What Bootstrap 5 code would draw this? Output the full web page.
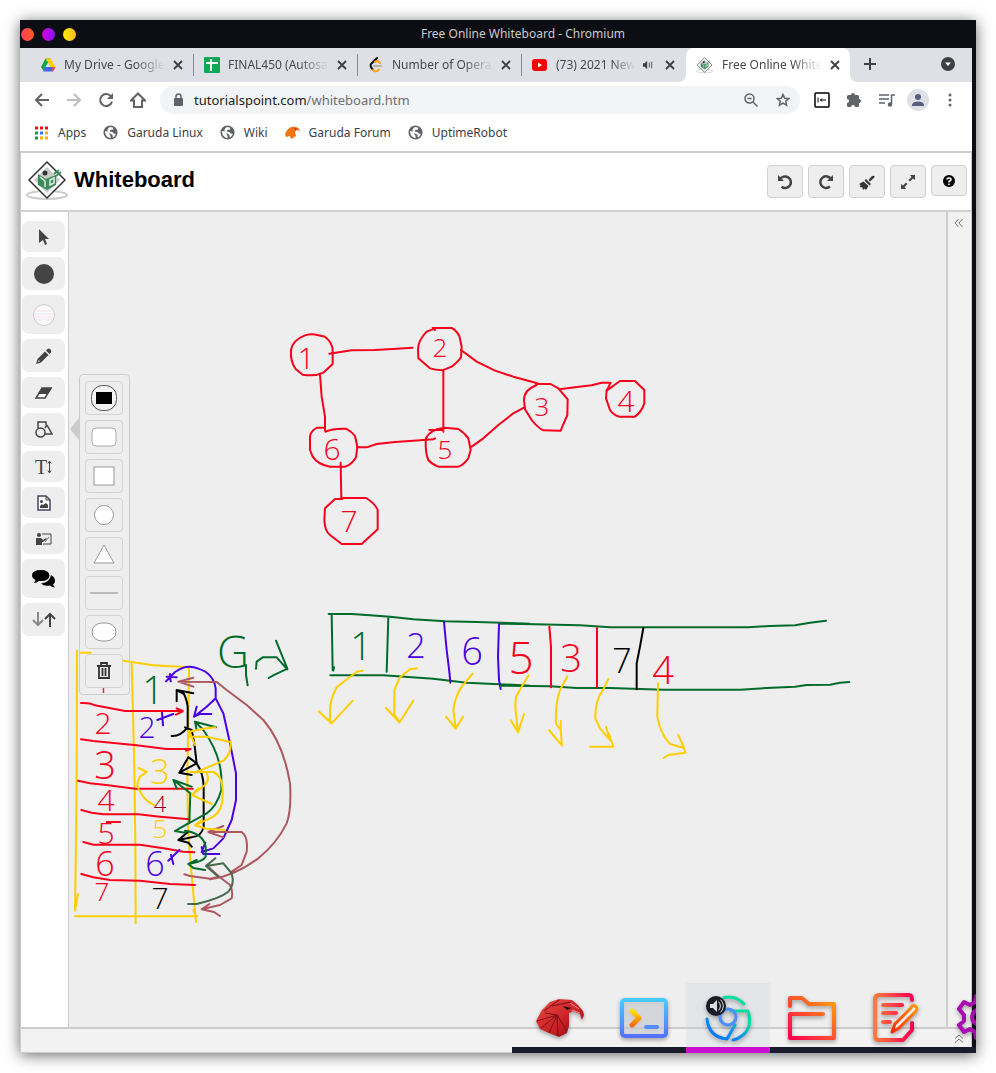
<!DOCTYPE html>
<html lang="en">
<head>
<meta charset="utf-8">
<meta name="viewport" content="width=device-width, initial-scale=1">
<title>Free Online Whiteboard</title>
<link href="https://cdn.jsdelivr.net/npm/bootstrap@5.3.0/dist/css/bootstrap.min.css" rel="stylesheet">
<style>
  body { background: #fff; font-family: "Noto Sans", "Open Sans", sans-serif; font-size: 12px; line-height: 18px; color: #3c4043; }
  svg { display: block; flex: none; }
  button { padding: 0; border: 0; background: none; color: inherit; }
  .desk { padding: 20px; min-height: 100vh; }
  .win { background: #fff; border-right: 4px solid #0d0e13; box-shadow: 0 2px 14px rgba(0,0,0,.6); min-width: 0; }
  .titlebar { background: #0d0e13; color: #c8cacd; height: 28px; margin-right: -4px; padding-left: 50px; }
  .dots { gap: 8px; left: 1px; top: 8px; }
  .dots button { width: 13px; height: 13px; border-radius: 50%; }
  .dot-r { background: linear-gradient(90deg, #ff3f5e, #ff5a1f) !important; }
  .dot-p { background: linear-gradient(90deg, #d300d8, #8a12ff) !important; }
  .dot-y { background: linear-gradient(90deg, #fff000, #ffb52b) !important; }
  .tabstrip { background: #dee0e6; height: 34px; padding-left: 10px; }
  .btab { width: 164px; padding: 0 10px 0 10px; gap: 8px; border-right: 1px solid #85888f; border-image: linear-gradient(transparent 7px, #85888f 7px, #85888f 27px, transparent 27px) 1; }
  .btab.last-idle { border-color: transparent; border-image: none; }
  .btab.open { background: #fff; border: 0; border-radius: 8px 8px 0 0; position: relative; }
  .btab.open::before, .btab.open::after { content: ""; position: absolute; bottom: 0; width: 8px; height: 8px; }
  .btab.open::before { left: -8px; background: radial-gradient(circle at 0 0, transparent 8px, #fff 8px); }
  .btab.open::after { right: -8px; background: radial-gradient(circle at 8px 0, transparent 8px, #fff 8px); }
  .btab a { color: #45484d; text-decoration: none; white-space: nowrap; overflow: hidden; flex: 1 1 0; -webkit-mask-image: linear-gradient(90deg, #000 70%, transparent); mask-image: linear-gradient(90deg, #000 70%, transparent); }
  .navrow { height: 36px; padding: 0 6px; }
  .navrow > button, .tbtn { width: 32px; height: 32px; display: flex; align-items: center; justify-content: center; flex: none; }
  .omni { background: #f1f3f4; border-radius: 14px; height: 28px; margin: 0 6px; padding: 0 10px 0 12px; gap: 10px; font-size: 13px; }
  .omni .url { flex: 1; min-width: 0; color: #6b7075; white-space: nowrap; overflow: hidden; cursor: text; }
  .omni .url b { color: #202124; font-weight: 400; }
  .bookmarks { height: 33px; gap: 17px; padding: 0 0 4px 15px; }
  .bookmarks a { color: #3c4043; text-decoration: none; gap: 9px; }
  .wb { border: 1px solid #ccc; border-top: 2px solid #ccc; flex: 1; }
  .wb-head { height: 59px; border-bottom: 2px solid #d0d0d0; padding: 12px 4px 0 5px; }
  .crest { margin-top: -6px; }
  .wb-head h1 { font: bold 22px/28px "Liberation Sans", Arial, sans-serif; color: #000; margin: 1px 0 0 4px; }
  .wb-head .acts { gap: 5px; margin-left: auto; }
  .wb-head .acts button { width: 36px; height: 33px; border: 1px solid #d0d0d0; border-radius: 4px; background: #eee; display: flex; align-items: center; justify-content: center; color: #444; }
  .wb-head .acts .help { height: 31px; }
  .tools { width: 48px; background: #fff; border-right: 1px solid #ccc; padding: 9px 3px 9px 1px; gap: 5px; }
  .tools button { width: 43px; height: 33px; border-radius: 7px; background: #eee; color: #444; display: flex; align-items: center; justify-content: center; flex: none; }
  .tools .low { height: 31px; }
  .tools .tall { height: 39px; }
  .tools .ti { font: 20px/24px "Liberation Serif", serif; }
  .board { background: #eee; overflow: hidden; min-height: 490px; min-width: 0; }
  .board .ink { position: absolute; inset: 0; width: 100%; height: 100%; fill: none; stroke-width: 2px; stroke-linecap: round; stroke-linejoin: round; }
  .ink svg { stroke-width: 6px; display: inline; }
  .ink text { stroke: none; text-anchor: middle; font-family: "Open Sans", sans-serif; font-weight: 300; font-size: 30px; }
  .ink .s22 { font-size: 22px; } .ink .s26 { font-size: 26px; } .ink .s34 { font-size: 34px; } .ink .s38 { font-size: 38px; } .ink .s44 { font-size: 44px; }
  .red { stroke: #f8001c; } text.red { fill: #f8001c; }
  .grn { stroke: #006b2b; } text.grn { fill: #006b2b; }
  .blu { stroke: #4a00e0; } text.blu { fill: #4a00e0; }
  .yel { stroke: #ffce00; } text.yel { fill: #ffce00; }
  .blk { stroke: #000; } text.blk { fill: #000; }
  .wine { stroke: #8b0020; } text.wine { fill: #8b0020; }
  .rose { stroke: #ad5860; }
  .moss { stroke: #44694c; }
  .shapes { position: absolute; left: 10px; top: 162px; width: 51px; border: 1px solid #ccc; border-radius: 4px; padding: 6px 6px 6px 5px; gap: 5px; }
  .shapes::before { content: ""; position: absolute; left: -10px; top: 43px; border: 11px solid transparent; border-left: 0; border-right: 9px solid #ccc; }
  .shapes button { height: 34px; border: 1px solid #d3d3d3; border-radius: 4px; background: #eee; display: flex; align-items: center; justify-content: center; color: #444; }
  .side { width: 25px; background: #f2f2f2; border-left: 2px solid #ccc; padding: 6px 3px 0 0; color: #777; }
  .foot { height: 25px; border-top: 2px solid #ccc; background: #f2f2f2; padding: 0 7px 4px 0; color: #777; }
  .dock { position: absolute; right: -4px; bottom: 0; width: 464px; padding-left: 6px; overflow: hidden; }
  .dock::before { content: ""; position: absolute; left: 0; right: 0; bottom: 0; height: 6px; background: #191c2a; }
  .dock button { width: 84px; height: 70px; display: flex; justify-content: center; flex: none; border-bottom: 6px solid transparent; position: relative; padding-top: 10px; }
  .dock .now { background: rgba(200,204,220,.25); border-bottom-color: #c80fd0; }
  .dock svg { filter: drop-shadow(0 2px 2px rgba(0,0,0,.35)); }
</style>
<script src="https://cdn.jsdelivr.net/npm/bootstrap@5.3.0/dist/js/bootstrap.bundle.min.js"></script>
</head>
<body>
<svg width="0" height="0" class="position-absolute" aria-hidden="true">
  <defs>
    <symbol id="x" viewBox="0 0 10 10"><path d="M1 1l8 8M9 1l-8 8" stroke="#3c4043" stroke-width="1.800"/></symbol>
    <symbol id="globe" viewBox="0 0 16 16"><circle cx="8" cy="8" r="7.500" fill="#5f6368"/><path d="M2.200 6.500L5 7l2 2v1.500l1 1V14Q3 13 2.200 8zM8 2l3 .8L10.500 5H8L7 7l3 .5 1.500 1.500 2.300.5Q12 13 10.500 13.200L10 10.500 6 8 4.500 5.500 6 3z" fill="#fff"/></symbol>
    <symbol id="logo" viewBox="0 0 44 42"><ellipse cx="21" cy="36" rx="20" ry="4" fill="none" stroke="#ccc" stroke-width="2"/><path d="M21 3l18 18-18 18L3 21z" fill="#fff" stroke="#333" stroke-width="1.500"/><path d="M21 8l13 13-13 13L8 21z" fill="#c9cbc9"/><circle cx="19" cy="14" r="2.500" fill="#333"/><path d="M12 15l8 5 10-4v10l-9 5-9-5z" fill="#3b8b5c"/><path d="M14 18l5 4v6M24 21l4-2v5l-4 2z" fill="none" stroke="#ddeee4" stroke-width="1.500"/><path d="M28 15l5-4m-3 6l5-4" stroke="#3b8b5c" stroke-width="2"/></symbol>
    <linearGradient id="gTerm" x1="0" y1="0" x2="0" y2="1"><stop stop-color="#46ccff"/><stop offset="1" stop-color="#5570ff"/></linearGradient>
    <linearGradient id="gSun" x1="0" y1="0" x2="0" y2="1"><stop stop-color="#ffe000"/><stop offset="1" stop-color="#ff6a00"/></linearGradient>
    <linearGradient id="gFold" x1="0" y1="1" x2="1" y2="0"><stop stop-color="#ff0050"/><stop offset="1" stop-color="#ffa50a"/></linearGradient>
    <linearGradient id="gNote" x1="0" y1="0" x2="1" y2="0"><stop stop-color="#ff7a3c"/><stop offset="1" stop-color="#ff0050"/></linearGradient>
    <linearGradient id="gPen" x1="1" y1="0" x2="0" y2="1"><stop stop-color="#ff9a0a"/><stop offset="1" stop-color="#ff2800"/></linearGradient>
    <linearGradient id="gChr" x1="0" y1="1" x2="1" y2="0"><stop stop-color="#006cff"/><stop offset=".45" stop-color="#1090f0"/><stop offset=".75" stop-color="#00dca0"/></linearGradient>
    <linearGradient id="gBird" x1="0" y1="0" x2="1" y2="1"><stop stop-color="#ee4a4a"/><stop offset=".6" stop-color="#c81e22"/><stop offset="1" stop-color="#7a0d12"/></linearGradient>
  </defs>
</svg>
<div class="desk d-flex flex-column">
<div class="win d-flex flex-column flex-grow-1 position-relative">

  <header class="titlebar d-flex align-items-center justify-content-center position-relative">
    <div class="dots d-flex position-absolute">
      <button class="dot-r" aria-label="Close window"></button><button class="dot-p" aria-label="Maximise window"></button><button class="dot-y" aria-label="Minimise window"></button>
    </div>
    <span>Free Online Whiteboard - Chromium</span>
  </header>

  <nav class="tabstrip d-flex" aria-label="Tabs">
    <div class="btab d-flex align-items-center">
      <svg width="16" height="16" viewBox="0 0 16 16"><path d="M5.500 1.500h5L8 6 3.500 14 1 10z" fill="#0da84f"/><path d="M5.500 1.500h5L15.500 10h-5z" fill="#ffcc00"/><path d="M5 10h10.500L13 14.500H3.300z" fill="#4a64f2"/><path d="M13 10h2.500L13 14.500 11.500 12z" fill="#ff4a3a"/><path d="M8 6l2.500 4h-5z" fill="#dee0e6"/></svg>
      <a href="#">My Drive - Google</a>
      <button aria-label="Close tab"><svg width="10" height="10"><use href="#x"/></svg></button>
    </div>
    <div class="btab d-flex align-items-center">
      <svg width="16" height="16" viewBox="0 0 16 16"><rect width="16" height="16" rx="1" fill="#0fa958"/><path d="M2 6h12M7 2v12" stroke="#fff" stroke-width="2"/></svg>
      <a href="#">FINAL450 (Autosa</a>
      <button aria-label="Close tab"><svg width="10" height="10"><use href="#x"/></svg></button>
    </div>
    <div class="btab d-flex align-items-center">
      <svg width="16" height="16" viewBox="0 0 16 16" fill="none" stroke-width="2" stroke-linecap="round"><path d="M6 9h7" stroke="#b3b3b3"/><path d="M9 1L3.500 6.500Q2 8 3 10l2 3" stroke="#111"/><path d="M5 13q3 3 6-.5M7 5q2-2 4 0l1 1" stroke="#ffa116"/></svg>
      <a href="#">Number of Opera</a>
      <button aria-label="Close tab"><svg width="10" height="10"><use href="#x"/></svg></button>
    </div>
    <div class="btab last-idle d-flex align-items-center">
      <svg width="16" height="16" viewBox="0 0 16 16"><rect y="2" width="15" height="12" rx="3" fill="#f00"/><path d="M6 5.500l4 2.500-4 2.500z" fill="#fff"/></svg>
      <a href="#">(73) 2021 New</a>
      <svg width="10" height="10" viewBox="0 0 12 10" fill="#3c4043"><path d="M0 3h2l3-3v10L2 7H0zM7 2h1v6H7zM10 1h1v8h-1z"/></svg>
      <button class="ms-1" aria-label="Close tab"><svg width="10" height="10"><use href="#x"/></svg></button>
    </div>
    <div class="btab open d-flex align-items-center">
      <svg width="18" height="18"><use href="#logo"/></svg>
      <a href="#" aria-current="page">Free Online White</a>
      <button aria-label="Close tab"><svg width="10" height="10"><use href="#x"/></svg></button>
    </div>
    <button class="tbtn ms-1" aria-label="New tab"><svg width="12" height="12" viewBox="0 0 12 12"><path d="M6 0v12M0 6h12" stroke="#3c4043" stroke-width="2"/></svg></button>
    <button class="tbtn ms-auto me-2" aria-label="Search tabs"><svg width="14" height="14" viewBox="0 0 14 14"><circle cx="7" cy="7" r="7" fill="#3c4043"/><path d="M4 5.500h6L7 9z" fill="#fff"/></svg></button>
  </nav>

  <div class="navrow d-flex align-items-center">
    <button aria-label="Back"><svg width="16" height="14" viewBox="0 0 16 14" fill="none" stroke="#5f6368" stroke-width="2"><path d="M15 7H2M8 1L2 7l6 6"/></svg></button>
    <button aria-label="Forward"><svg width="16" height="14" viewBox="0 0 16 14" fill="none" stroke="#bcbec1" stroke-width="2"><path d="M1 7h13M8 1l6 6-6 6"/></svg></button>
    <button aria-label="Reload"><svg width="16" height="16" viewBox="0 0 16 16" fill="none" stroke="#5f6368" stroke-width="2"><path d="M13 4.500A6 6 0 1 0 14 9.500"/><path d="M15 1v6H9z" fill="#5f6368" stroke="none"/></svg></button>
    <button aria-label="Home"><svg width="16" height="16" viewBox="0 0 16 16" fill="none" stroke="#5f6368" stroke-width="2"><path d="M1 8.500L8 1.500l7 7h-3V15H4V8.500z"/></svg></button>
    <div class="omni d-flex align-items-center flex-grow-1">
      <svg width="12" height="14" viewBox="0 0 12 14"><rect x="2" y="5" width="9" height="8" rx="1" fill="#5f6368"/><path d="M4 6V3.500a2.500 2.500 0 0 1 5 0V6" fill="none" stroke="#5f6368" stroke-width="1.500"/></svg>
      <div class="url"><b>tutorialspoint.com</b>/whiteboard.htm</div>
      <button class="me-2" aria-label="Zoom"><svg width="14" height="14" viewBox="0 0 14 14" fill="none" stroke="#5f6368" stroke-width="1.500"><circle cx="5.500" cy="5.500" r="4.500"/><path d="M3.500 5.500h4M9 9l4.500 4.500"/></svg></button>
      <button aria-label="Bookmark"><svg width="14" height="14" viewBox="0 0 14 14" fill="none" stroke="#5f6368" stroke-width="1.500"><path d="M7 1.500l1.700 3.800 4 .3-3 2.700.9 4L7 10.200 3.400 12.300l.9-4-3-2.700 4-.3z"/></svg></button>
    </div>
    <button aria-label="Extension"><svg width="16" height="16" viewBox="0 0 16 16"><rect x="1" y="1" width="14" height="14" rx="1" fill="none" stroke="#000" stroke-width="1.500"/><path d="M4 5.500v5M6 8h6M8 6.500L6.500 8 8 9.500" stroke="#000" fill="none"/></svg></button>
    <button aria-label="Extensions"><svg width="16" height="16" viewBox="0 0 16 16" fill="#5f6368"><path d="M1 4.500q0-1.500 1.500-1.500H5a2 2 0 1 1 4 0h2.500Q13 3 13 4.500V7a2 2 0 1 1 0 4v2.500q0 1.500-1.500 1.500H9a2 2 0 1 0-4 0H2.500Q1 15 1 13.500V11a2 2 0 1 0 0-4z"/></svg></button>
    <button aria-label="Media"><svg width="17" height="14" viewBox="0 0 17 14" fill="none" stroke="#5f6368" stroke-width="1.500"><path d="M1 2h10M1 6h10M1 10h6M13.500 11V2H17"/><circle cx="12" cy="11.500" r="1.500" fill="#5f6368"/></svg></button>
    <button aria-label="Profile"><svg width="22" height="22" viewBox="0 0 22 22"><circle cx="11" cy="11" r="11" fill="#dee0e6"/><circle cx="11" cy="8" r="3" fill="#565f7d"/><path d="M5 17v-1.500Q6 12.500 11 12.500t6 3V17z" fill="#565f7d"/></svg></button>
    <button aria-label="Menu"><svg width="4" height="14" viewBox="0 0 4 14" fill="#5f6368"><circle cx="2" cy="2" r="1.500"/><circle cx="2" cy="7" r="1.500"/><circle cx="2" cy="12" r="1.500"/></svg></button>
  </div>

  <nav class="bookmarks d-flex align-items-center" aria-label="Bookmarks">
    <a href="#" class="d-flex align-items-center"><svg width="14" height="14" viewBox="0 0 14 14"><path d="M0 2h14" stroke="#f8001c" stroke-width="3" stroke-dasharray="3 2"/><path d="M0 7h3M0 12h3" stroke="#0f9d58" stroke-width="3"/><path d="M5 7h3" stroke="#3b6ff5" stroke-width="3"/><path d="M10 7h3M5 12h3m2 0h3" stroke="#fbb000" stroke-width="3"/></svg>Apps</a>
    <a href="#" class="d-flex align-items-center"><svg width="15" height="15"><use href="#globe"/></svg>Garuda Linux</a>
    <a href="#" class="d-flex align-items-center"><svg width="15" height="15"><use href="#globe"/></svg>Wiki</a>
    <a href="#" class="d-flex align-items-center"><svg width="15" height="14" viewBox="0 0 15 14"><path d="M0 8Q2 3 6 1q5-1 7 1 2 1 2 4l-2-2q-2 0-3 2l1 4-3 2-2 1-1-3-4 1z" fill="#f47414"/><path d="M9 2l4 1-3 1z" fill="#b22"/></svg>Garuda Forum</a>
    <a href="#" class="d-flex align-items-center"><svg width="15" height="15"><use href="#globe"/></svg>UptimeRobot</a>
  </nav>

  <main class="wb d-flex flex-column">
    <div class="wb-head d-flex align-items-start">
      <svg width="44" height="42" class="crest"><use href="#logo"/></svg>
      <h1>Whiteboard</h1>
      <div class="acts d-flex align-items-start">
        <button aria-label="Undo"><svg width="16" height="16" viewBox="0 0 16 16"><path d="M3 5.500A5.800 5.800 0 1 1 4.500 12.800" fill="none" stroke="#444" stroke-width="2.500"/><path d="M1 1v6h6z" fill="#444"/></svg></button>
        <button aria-label="Redo"><svg width="16" height="16" viewBox="0 0 16 16"><path d="M13 5A5.800 5.800 0 1 0 12 12.500" fill="none" stroke="#444" stroke-width="2.500"/><path d="M15 1v6H9z" fill="#444"/></svg></button>
        <button aria-label="Clear"><svg width="16" height="18" viewBox="0 0 16 18" fill="#333"><path d="M12.500 3.500q2-1.500 2.800-.4t-1 2.500L11 8.500 9.500 7zM7 6l5 5-1.500 1.500-5-5zM4.500 8.500L9.500 13 7 17l-1.500-1.500L4 17l-.5-2.500L1 14l.5-2L0 11z"/></svg></button>
        <button aria-label="Full screen"><svg width="16" height="16" viewBox="0 0 16 16" fill="#444"><path d="M10 1h5v5l-2-1.500-3 3L8.500 6l3-3zM6 15H1v-5l2 1.500 3-3L7.500 10l-3 3z"/></svg></button>
        <button class="help" aria-label="Help"><svg width="12" height="12" viewBox="0 0 12 12"><circle cx="6" cy="6" r="6" fill="#000"/><path d="M4 4.500Q4 3 6 3t2 1.500Q8 5.500 6 6.500V7.500M6 8.500V10" fill="none" stroke="#fff" stroke-width="1.500"/></svg></button>
      </div>
    </div>

    <div class="d-flex flex-grow-1">
      <div class="tools d-flex flex-column" role="toolbar" aria-label="Drawing tools">
        <button class="low" aria-label="Select"><svg width="12" height="16" viewBox="0 0 12 16" fill="#444"><path d="M1 0l10 10H7l2 5-2 1-2-5-4 3z"/></svg></button>
        <button aria-label="Colour"><svg width="20" height="20"><circle cx="10" cy="10" r="10" fill="#444"/></svg></button>
        <button class="tall" aria-label="Background"><svg width="22" height="22"><circle cx="11" cy="11" r="10.500" fill="#faf8fa" stroke="#ccc"/><path d="M3 7h16M1 13h20" stroke="#fae4e4"/><path d="M2 10h18M3 16h16" stroke="#e9e9f4"/></svg></button>
        <button aria-label="Pencil"><svg width="16" height="16" viewBox="0 0 16 16" fill="#444"><path d="M11.500 1q1.500-1 3 .5T15 4.500L13.500 6 10 2.500zM9 3.500L12.500 7 5 14.500 0 16l1.500-5zM2.500 12L2 14l2-.5z" fill-rule="evenodd"/></svg></button>
        <button class="low" aria-label="Eraser"><svg width="18" height="12" viewBox="0 0 18 12"><path d="M7 1h9l-6 10H1z" fill="#fff" stroke="#444" stroke-width="1.500"/><path d="M7 1h10l-4 6H3z" fill="#444"/></svg></button>
        <button aria-label="Shapes"><svg width="18" height="17" viewBox="0 0 18 17" fill="none" stroke="#444" stroke-width="1.500"><path d="M3 7V1h8v3M12 4l5 9h-7"/><path d="M10 7l2-3"/><circle cx="5.500" cy="11.500" r="4.500" fill="#eee"/></svg></button>
        <button class="low ti" aria-label="Text"><span>T</span><svg width="5" height="14" viewBox="0 0 5 14"><path d="M2.500 2v10M1 3.500L2.500 1 4 3.500M1 10.500L2.500 13 4 10.500" fill="none" stroke="#444"/></svg></button>
        <button class="low" aria-label="Image"><svg width="14" height="16" viewBox="0 0 14 16"><path d="M1 1h8l4 4v10H1z" fill="#fff" stroke="#446" stroke-width="1.500"/><path d="M9 1v4h4" fill="none" stroke="#444"/><circle cx="4.500" cy="6.500" r="1.500" fill="#444"/><path d="M3 13v-2l2-2 1 1 3-2 2 2v3z" fill="#444"/></svg></button>
        <button class="low" aria-label="Present"><svg width="16" height="12" viewBox="0 0 16 12"><path d="M6 1h9v10H7" fill="none" stroke="#444" stroke-width="1"/><circle cx="3" cy="2" r="2" fill="#444"/><path d="M0 5h5l2 2 3-2 1 1-4 3H6v3H0z" fill="#444"/><path d="M9 9l4-5" stroke="#777"/></svg></button>
        <button class="tall" aria-label="Comments"><svg width="24" height="19" viewBox="0 0 24 19"><path d="M19 6q4 2 4 6 0 2-2 3.500l2 3q-3 0-5-2-6 1-9-2 9-1 10-8.500z"/><path d="M9 1q8 0 8.500 5.500Q17 12 9 12H7q-2 2-5 2l1.500-3Q0 9 0 6.500 0 1 9 1z"/></svg></button>
        <button aria-label="Reorder"><svg width="24" height="15" viewBox="0 0 24 15" fill="none" stroke-width="2"><path d="M6 0v13M1 8l5 5 5-5" stroke="#888"/><path d="M18 15V2M13 7l5-5 5 5" stroke="#444"/></svg></button>
      </div>

      <section class="board flex-grow-1 position-relative" aria-label="Board">
        <svg class="ink">
          <g transform="translate(-69 -212)">
            <!-- graph: nodes and edges -->
            <svg x="280" y="310" width="380" height="240" viewBox="0 0 1140 720" class="red">
              <path d="M75 76Q95 70 112 75L135 80Q160 100 158 125L158 162 130 188Q105 200 68 194L48 178Q30 155 33 120 38 90 75 76z"/>
              <path d="M148 131L215 121 285 120 350 116 398 113M120 195L125 260 135 320 135 362"/>
              <path d="M465 60L458 54 515 54Q528 60 538 78L545 110 543 142Q535 155 515 170L487 181Q465 180 450 175L415 145 414 118Q415 90 440 65L465 55"/>
              <path d="M543 120L590 155 645 182 700 200 772 220M490 182V365M448 360H490"/>
              <path d="M768 222H812L835 235 863 268 862 315 842 362 790 361Q775 355 755 330L735 298 732 270Q732 240 770 225M838 238L885 232 935 226 965 218 992 218 980 242"/>
              <path d="M980 242L1020 213 1065 213 1093 240V280Q1085 305 1065 320H1018Q1000 315 990 300L978 265 980 240"/>
              <path d="M575 410L610 385 655 345 700 310 733 292"/>
              <path d="M465 385L460 388 400 392 345 396 290 402 260 412H232"/>
              <path d="M437 390Q440 370 470 358L495 353 535 357Q555 370 565 385L572 420 565 445Q550 465 535 470H475Q455 462 445 450 436 430 437 390z"/>
              <path d="M137 365Q155 355 198 356 215 365 225 378L232 410 228 442Q215 465 195 470H150Q115 465 98 440L90 420V378Q95 360 112 353H135M182 458L184 565"/>
              <path d="M187 567H165L135 595 133 630Q135 665 150 675L185 702H245L293 658V600Q285 580 258 564H187"/>
            </svg>
            <text class="red" x="306" y="369">1</text><text class="red s26" x="440" y="357">2</text><text class="red s26" x="542" y="416">3</text><text class="red" x="626" y="412">4</text><text class="red s26" x="445" y="459">5</text><text class="red" x="332" y="460">6</text><text class="red" x="349" y="532">7</text>
            <!-- queue frame and dividers -->
            <svg x="200" y="600" width="330" height="170" viewBox="0 0 990 510" class="grn">
              <path d="M138 195L138 225 143 256M168 206L170 185 188 172 230 172 262 208M228 122L262 206 220 226 206 234"/>
              <path d="M386 42H455L510 46 570 50 640 58 735 64 830 66 990 71M395 44L398 210M402 202L400 212M565 52L560 215M391 226H550L700 236 800 248 990 257"/>
              <path class="blu" d="M732 66L740 150 748 215 751 248M897 72L894 170 897 240 902 267"/>
              <path class="yel" d="M488 212L470 215 410 262Q390 300 390 330V368M356 334L395 370 458 302M372 350L396 366M651 205L630 208 600 232 583 270V345L598 368 640 302M558 324L598 366 588 350M818 221L785 260Q765 290 760 330L767 386 789 350M738 350L767 386"/>
            </svg>
            <svg x="500" y="600" width="370" height="170" viewBox="0 0 1110 510" class="grn">
              <path d="M0 71L70 72 240 76 330 82H745L810 78 885 76 930 68 978 62M0 257L150 259 230 264 330 264 490 269H720L800 264 885 260 920 255 990 254 1020 248 1048 246"/>
              <path class="red" d="M148 80L153 140 153 262M291 84V262"/>
              <path class="blk" d="M430 84L420 140 410 190V268"/>
              <path class="yel" d="M86 226L70 252 48 290Q44 320 48 345L54 395M32 361L54 397 72 342M202 229L180 270Q165 310 168 372L182 390 182 362M147 390L186 437 182 390M325 237L310 268Q285 300 286 355L300 385 330 420 318 380M326 400L340 440H270M474 250L472 350Q480 400 510 432L552 444 535 405M552 444L556 458 505 465 491 474"/>
            </svg>
            <text class="grn s44" x="233" y="668">G</text><text class="grn s38" x="361" y="660">1</text><text class="blu s34" x="416" y="658">2</text><text class="blu s38" x="472" y="665">6</text><text class="red s44" x="521" y="674">5</text><text class="red s38" x="571" y="672">3</text><text class="blk s34" x="622" y="673">7</text><text class="red s38" x="663" y="684">4</text>
            <!-- adjacency table -->
            <svg x="60" y="640" width="250" height="290" viewBox="0 0 750 870">
              <path class="yel" d="M51 32L50 400 48 600 45 812 54 762M60 38H92M190 62L215 66 280 76 385 82M215 66L222 340 226 600 227 850M387 84L385 250 382 400 384 560 390 650 400 760 408 846M45 829H412M400 810L408 830"/>
              <path class="red" d="M63 189Q90 188 105 196L195 213H368L350 205M368 214L348 224M63 298L100 303 230 316 320 327H392L378 332M54 422L90 430 145 436 225 446H398M64 510L95 518 130 523H235L300 530 388 538M140 546H180M70 606L100 614 240 614 320 626 370 635 403 637M64 702L100 712 150 720 240 722 330 732 405 735"/>
              <path class="blu" d="M318 124L345 96Q380 70 415 86 460 100 467 145V175L440 200 402 230 410 200M402 230L420 222H454M330 102L332 124M320 110L350 112M292 240L340 222M306 218L309 256M467 175L490 220 510 310 528 400V480L515 540 490 595 460 625 425 636 436 608M425 622L430 642H478M325 662L358 630M333 645L340 672"/>
              <path class="rose" d="M400 140L355 125 400 113M355 125L470 126 500 150 560 195 610 240Q670 310 690 430 695 510 680 550 650 610 595 655 520 710 450 718M373 703L390 708 450 716 480 710M490 558L445 576 490 592M445 576H545Q565 590 560 635L545 675 515 695M440 676L475 708 510 735Q520 755 515 775L480 795 425 808 448 792M425 808L462 816 480 828"/>
              <path class="moss" d="M466 655L438 678 475 710M440 678L490 670 515 700Q525 735 505 755 480 775 410 792H384"/>
              <path class="blk" d="M350 184L350 150 400 160M350 150L372 162Q385 190 383 215V262Q360 290 335 288M375 262L395 270 403 310 410 370 386 352M410 370L358 398 385 352M358 398L395 405M410 370Q430 400 431 440V560Q425 590 395 592L355 600 385 575M355 600L385 608 395 620"/>
              <path class="grn" d="M410 270L405 245 468 262M405 245L430 270Q480 340 484 410V450Q470 500 440 520L345 573 375 578M345 573L388 548 391 460 340 420 395 440M340 420L350 445M375 572Q430 580 437 620V650Q430 665 385 672L410 660M385 672L400 684 435 690"/>
              <path class="yel" d="M466 262L430 266 388 275 405 315M388 290L440 290 512 306Q515 340 490 362L405 398M390 396H460Q490 410 488 460 490 510 460 530L405 556 425 540M405 556L440 566 495 570M440 400Q450 420 435 435L396 465 415 445M396 465L455 492M236 384L260 396 240 410Q228 430 235 445 250 480 282 495"/>
            </svg>
            <text class="red s26" x="103" y="693">1</text><text class="red" x="103" y="734">2</text><text class="red s38" x="105" y="779">3</text><text class="red" x="106" y="811">4</text><text class="red" x="106" y="844">5</text><text class="red s34" x="105" y="876">6</text><text class="red s26" x="102" y="901">7</text>
            <text class="grn s38" x="153" y="704">1</text><text class="blu" x="147" y="738">2</text><text class="yel s34" x="160" y="784">3</text><text class="wine s22" x="160" y="812">4</text><text class="yel s26" x="160" y="838">5</text><text class="blu s34" x="155" y="876">6</text><text class="blk" x="160" y="909">7</text>
          </g>
        </svg>
        <div class="shapes d-flex flex-column" role="toolbar" aria-label="Shapes">
          <button aria-label="Fill"><svg width="26" height="26"><rect x=".5" y=".5" width="25" height="25" rx="11" fill="#f4f4f4" stroke="#555"/><rect x="5" y="7" width="16" height="12" fill="#000"/></svg></button>
          <button aria-label="Rounded rectangle"><svg width="26" height="20"><rect x="1" y="1" width="24" height="18" rx="4" fill="#fff" stroke="#aaa"/></svg></button>
          <button aria-label="Rectangle"><svg width="22" height="20"><rect x="1" y="1" width="20" height="18" fill="#fff" stroke="#999"/></svg></button>
          <button aria-label="Circle"><svg width="20" height="20"><circle cx="10" cy="10" r="9.500" fill="#fff" stroke="#999"/></svg></button>
          <button aria-label="Triangle"><svg width="22" height="20"><path d="M11 1l10 18H1z" fill="#fff" stroke="#999"/></svg></button>
          <button aria-label="Line"><svg width="28" height="4"><path d="M0 2h28" stroke="#bbb" stroke-width="2"/></svg></button>
          <button aria-label="Ellipse"><svg width="26" height="20"><rect x="1" y="1" width="24" height="18" rx="10" fill="#fff" stroke="#999"/></svg></button>
          <button aria-label="Delete"><svg width="16" height="18" viewBox="0 0 16 18" fill="none" stroke="#333" stroke-width="1.800"><path d="M1 4h14M5 4V1h6v3M3 5v11h10V5M6.500 6v8M9.500 6v8"/></svg></button>
        </div>
      </section>

      <aside class="side d-flex align-items-start justify-content-center"><button aria-label="Expand panel"><svg width="9" height="10" viewBox="0 0 9 10" fill="none" stroke="#777"><path d="M4.500 1L1 5l3.500 4M8.500 1L5 5l3.500 4"/></svg></button></aside>
    </div>
    <div class="foot d-flex align-items-center justify-content-end"><button aria-label="Expand footer"><svg width="10" height="9" viewBox="0 0 10 9" fill="none" stroke="#777"><path d="M1 4.500L5 1l4 3.500M1 8.500L5 5l4 3.500"/></svg></button></div>
  </main>

  <div class="dock d-flex" role="toolbar" aria-label="Dock">
    <button aria-label="Garuda"><svg width="50" height="50" viewBox="0 0 50 50"><path d="M1 28L7 17 15 9 24 6 37 7 43 12 48 18 49 22 47 27 45 21 38 18 34 20 34 33 32 40 24 44 14 40 5 36z" fill="url(#gBird)"/><path d="M22 22L2 28M22 22L6 35M22 22L14 40M22 22L23 43M22 22L32 38M24 7L9 18M36 9L17 13M22 22L10 20" stroke="#7a1014" stroke-width="1"/><path d="M28 13l8 2-4 2z" fill="#111"/><path d="M37 17l8 3M35 10l9 6" stroke="#f58d8d"/></svg></button>
    <button aria-label="Terminal"><svg width="50" height="50" viewBox="0 0 50 50" fill="none" stroke-linecap="round" stroke-linejoin="round"><rect x="3" y="7" width="44" height="36" rx="3" fill="#e3e6ee" fill-opacity=".6" stroke="url(#gTerm)" stroke-width="4"/><path d="M13 18l7 7-7 7" stroke="url(#gSun)" stroke-width="5"/><path d="M27 34h11" stroke="#528cff" stroke-width="4"/></svg></button>
    <button class="now" aria-label="Chromium"><svg width="50" height="50" viewBox="0 0 50 50" fill="none" stroke-linecap="round"><path d="M21 4.500Q33 2 41 11" stroke="#00dfa0" stroke-width="3"/><path d="M28 18H45Q50 34 40 42 35 46 30 47M4 26Q6 44 24 46L32 32" stroke="url(#gChr)" stroke-width="3" stroke-linejoin="round"/><circle cx="25" cy="24" r="8" stroke="#4d8dff" stroke-width="3"/><circle cx="13" cy="13" r="10" fill="#191c24"/><path d="M7 11h3l4-4v12l-4-4H7z" fill="#ddd"/><path d="M16 9q3 4 0 8M18 7q5 6 0 12" stroke="#ddd" stroke-width="1"/></svg></button>
    <button aria-label="Files"><svg width="50" height="50" viewBox="0 0 50 50" fill="none" stroke="url(#gFold)" stroke-width="4" stroke-linecap="round" stroke-linejoin="round"><path d="M3 13V5H15l7 6H47V45H3V21H36"/></svg></button>
    <button aria-label="Editor"><svg width="50" height="50" viewBox="0 0 50 50" fill="none" stroke="url(#gNote)" stroke-width="4" stroke-linecap="round" stroke-linejoin="round"><path d="M41 7Q41 2 38 2H8Q4 2 4 6V43Q4 47 8 47H32L41 37V30M12 12H31M12 20H25M12 29H19"/><path d="M40 15L24 31 21 39 28 35 45 18Q47 14 44 13T40 15z" stroke="url(#gPen)" fill="#eee" stroke-width="3"/></svg></button>
    <button aria-label="Settings"><svg width="50" height="50" viewBox="0 0 50 50" fill="none" stroke="#a80bb0" stroke-width="4" stroke-linejoin="round"><path d="M21 3h8l1 6 5 3 6-3 5 7-5 5v6l5 5-5 7-6-3-5 3-1 6h-8l-1-6-5-3-6 3-5-7 5-4v-6l-5-6 5-7 6 3 5-3z"/><circle cx="25" cy="24" r="8" fill="#200a24"/></svg></button>
  </div>
</div>
</div>
</body>
</html>
